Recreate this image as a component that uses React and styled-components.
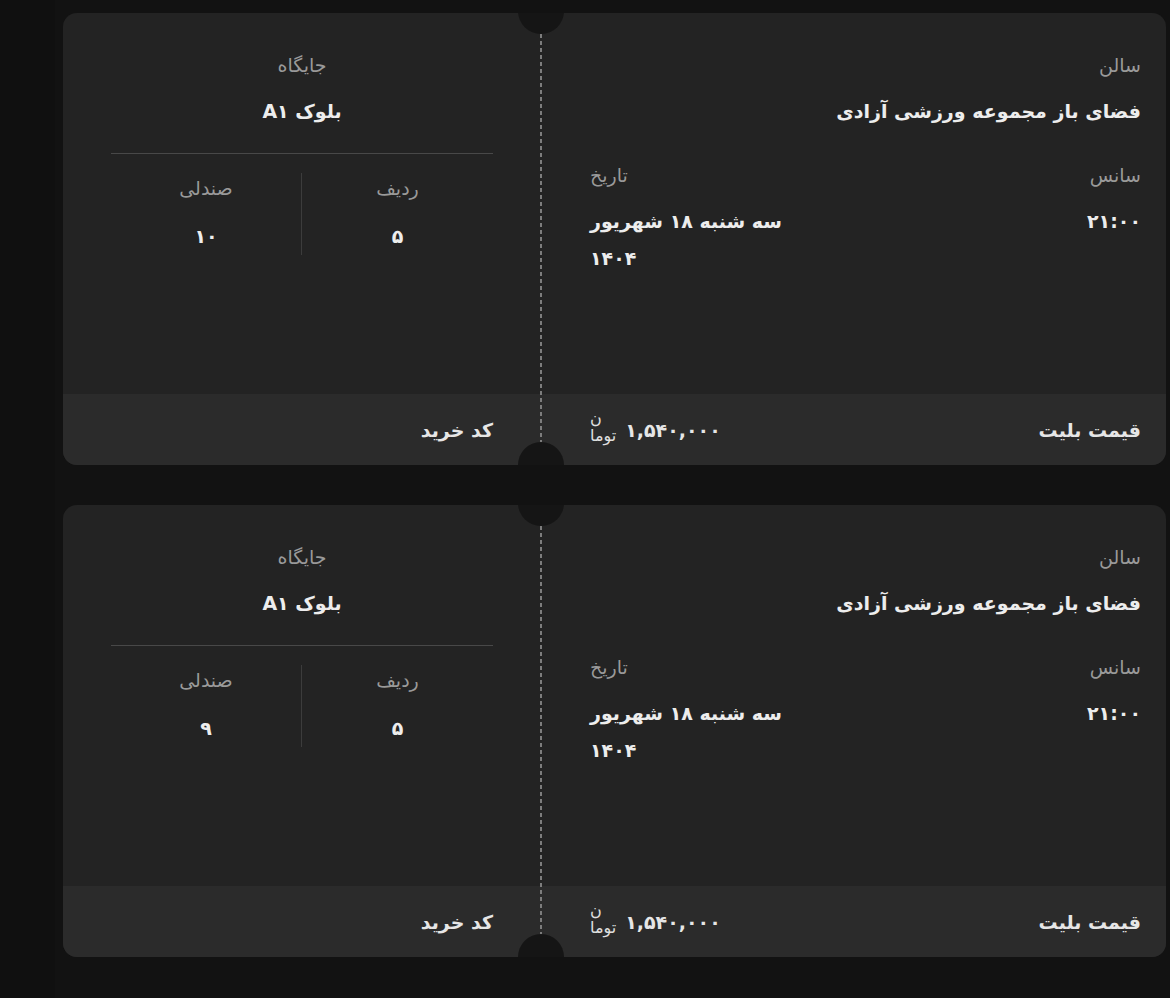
import React from 'react';
import styled, { createGlobalStyle } from 'styled-components';

const GlobalStyle = createGlobalStyle`
  html, body {
    margin: 0;
    padding: 0;
    background: #121212;
  }
  body {
    font-family: "DejaVu Sans", "Noto Sans", sans-serif;
    color: #ececec;
    direction: rtl;
  }
`;

const Page = styled.div`
  display: flex;
  flex-direction: column;
  gap: 40px;
  padding: 13px 4px 40px 63px;
  min-height: 998px;
  box-sizing: border-box;
  background: linear-gradient(to right, #101010 55px, #121212 55px);
`;

const Ticket = styled.div`
  position: relative;
  display: grid;
  grid-template-columns: 1fr 478px;
  grid-template-rows: 381px 71px;
  background: #232323;
  border-radius: 14px;
  overflow: hidden;

  /* perforation */
  &::before {
    content: '';
    position: absolute;
    left: 477px;
    top: 0;
    bottom: 0;
    width: 2px;
    background: repeating-linear-gradient(
      to bottom,
      #7d7d7d 0 4px,
      transparent 4px 7px
    );
  }
`;

const Notch = styled.span`
  position: absolute;
  left: 455px;
  width: 46px;
  height: 46px;
  border-radius: 50%;
  background: #151515;
  z-index: 1;
  ${p => (p.$bottom ? 'bottom: -23px;' : 'top: -25px;')}
`;

const Label = styled.div`
  font-size: 19px;
  line-height: 24px;
  color: #9a9a9a;
`;

const Value = styled.div`
  margin-top: 16px;
  font-size: 19px;
  line-height: 37px;
  font-weight: 600;
  color: #ededed;
`;

const Main = styled.div`
  padding: 40px 25px 0 49px;
`;

const MainRow = styled.div`
  display: flex;
  justify-content: space-between;
  margin-top: 33px;
`;

const DateField = styled.div`
  text-align: left;
  max-width: 215px;
`;

const Stub = styled.div`
  padding: 40px 48px 0;
  text-align: center;
`;

const Rule = styled.hr`
  margin: 23px 0 19px;
  border: 0;
  height: 1px;
  background: #484848;
`;

const SeatRow = styled.div`
  display: grid;
  grid-template-columns: 1fr 1fr;
`;

const SeatCell = styled.div`
  padding-top: 3px;
  & + & {
    border-right: 1px solid #3c3c3c;
  }
`;

const SeatValue = styled(Value)`
  margin-top: 18px;
`;

const Footer = styled.div`
  display: flex;
  align-items: center;
  justify-content: space-between;
  background: #2b2b2b;
  padding: ${p => (p.$stub ? '0 48px' : '0 25px 0 49px')};
  font-size: 19px;
  font-weight: 600;
  color: #e6e6e6;
`;

const Price = styled.div`
  display: flex;
  align-items: center;
  gap: 9px;
  font-size: 19px;
  font-weight: 600;
`;

const Toman = styled.span`
  display: inline-flex;
  flex-direction: column;
  align-items: flex-end;
  font-size: 16px;
  line-height: 17px;
  font-weight: 400;
  color: #e0e0e0;
  margin-top: -6px;
`;

const tickets = [
  { row: '۵', seat: '۱۰' },
  { row: '۵', seat: '۹' }
];

const TicketCard = ({ row, seat }) => (
  <Ticket>
    <Notch />
    <Notch $bottom />
    <Main>
      <Label>سالن</Label>
      <Value>فضای باز مجموعه ورزشی آزادی</Value>
      <MainRow>
        <div>
          <Label>سانس</Label>
          <Value>۲۱:۰۰</Value>
        </div>
        <DateField>
          <Label>تاریخ</Label>
          <Value>سه شنبه ۱۸ شهریور ۱۴۰۴</Value>
        </DateField>
      </MainRow>
    </Main>
    <Stub>
      <Label>جایگاه</Label>
      <Value>بلوک A۱</Value>
      <Rule />
      <SeatRow>
        <SeatCell>
          <Label>ردیف</Label>
          <SeatValue>{row}</SeatValue>
        </SeatCell>
        <SeatCell>
          <Label>صندلی</Label>
          <SeatValue>{seat}</SeatValue>
        </SeatCell>
      </SeatRow>
    </Stub>
    <Footer>
      <span>قیمت بلیت</span>
      <Price>
        <span>۱,۵۴۰,۰۰۰</span>
        <Toman>
          <span>ن</span>
          <span>توما</span>
        </Toman>
      </Price>
    </Footer>
    <Footer $stub>
      <span>کد خرید</span>
    </Footer>
  </Ticket>
);

export default function App() {
  return (
    <>
      <GlobalStyle />
      <Page>
        {tickets.map((t, i) => (
          <TicketCard key={i} {...t} />
        ))}
      </Page>
    </>
  );
}
